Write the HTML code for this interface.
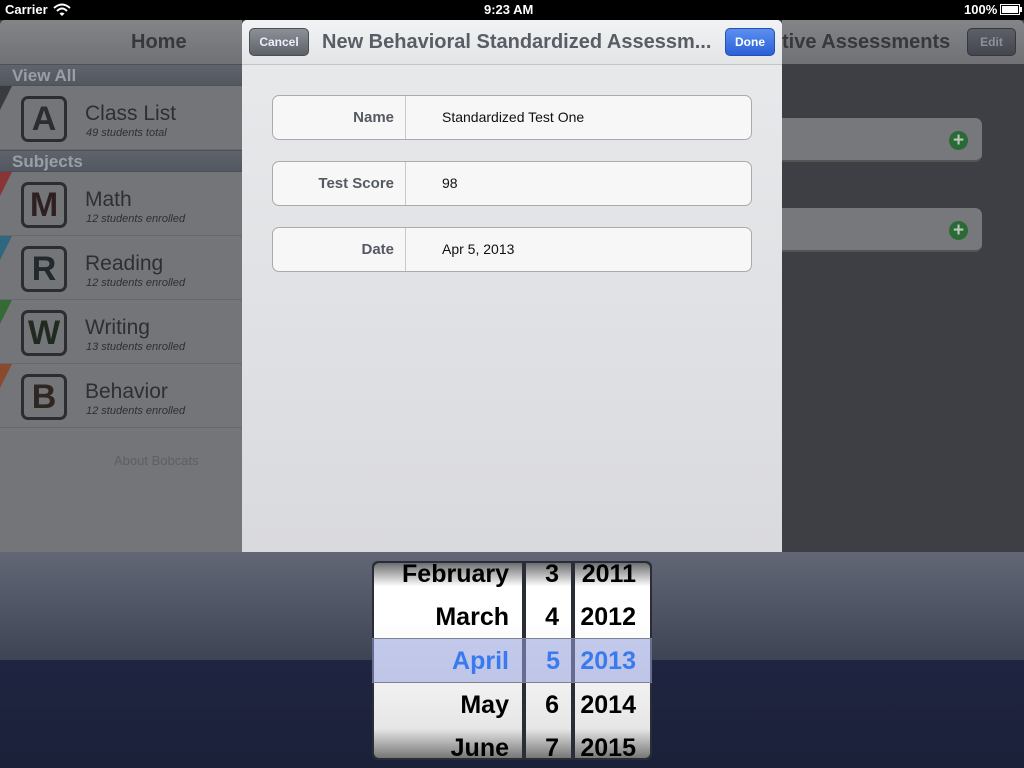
<!DOCTYPE html>
<html><head><meta charset="utf-8"><style>
*{margin:0;padding:0;box-sizing:border-box}
body{width:1024px;height:768px;position:relative;overflow:hidden;background:#3d3f45;font-family:"Liberation Sans",sans-serif}
.abs{position:absolute}
#status{left:0;top:0;width:1024px;height:20px;background:#000;color:#fff;font-size:13px;font-weight:bold}
#side{left:0;top:20px;width:242px;height:532px;background:#747578;border-top-left-radius:5px}
.nav{top:20px;height:44px;background:linear-gradient(#848588,#707174)}
.sec{left:0;width:242px;height:22px;background:linear-gradient(#5f646c,#53575f);color:#9a9ea6;font-weight:bold;font-size:17px;padding-left:12px;line-height:22px;border-top:1px solid #4c5058;border-bottom:1px solid #4c5058}
.row{left:0;width:242px;height:64px;border-bottom:1px solid #68696c}
.icon{left:21px;width:46px;height:46px;border:3px solid #2c2d30;border-radius:7px;font-size:34px;font-weight:bold;text-align:center;line-height:40px;color:#2c2d30}
.t{left:85px;font-size:21px;color:#2e2f32}
.s{left:86px;font-size:11px;font-style:italic;color:#2e2f32}
.card{left:782px;width:200px;height:44px;background:#77787b;border-radius:0 7px 7px 0;border-bottom:2px solid #555}
.plus{width:19px;height:19px;border-radius:50%;background:#2a6a35;color:#b9c6bb;font-weight:bold;text-align:center;line-height:19px;font-size:19px}
#modal{left:242px;top:20px;width:540px;height:532px;background:linear-gradient(#e9eaec,#d9dade);border-radius:5px 5px 0 0}
.field{left:30px;width:480px;height:45px;background:#f7f7f7;border:1px solid #a9abae;border-radius:7px}
.lab{left:0;width:133px;height:43px;border-right:1px solid #c7c8ca;text-align:right;padding-right:11px;line-height:43px;font-weight:bold;font-size:15px;color:#555a62}
.val{left:169px;line-height:43px;font-size:14px;color:#111}
#pick{left:0;top:552px;width:1024px;height:216px;background:linear-gradient(#626776 0%,#3f4455 50%,#1f2440 50.1%,#1c213a 100%)}
.col{top:563px;height:195px;background:linear-gradient(#6e6e70,#fff 12%,#fff 30%,#f2f2f2 60%,#e6e6e6 85%,#777 100%);overflow:hidden}
.col div{position:absolute;right:13px;font-size:25px;font-weight:bold;color:#000}
</style></head><body>
<div id="status" class="abs"><span class="abs" style="left:5px;top:2px">Carrier</span>
<svg class="abs" style="left:53px;top:3px" width="18" height="13" viewBox="0 0 18 13"><path d="M1 5 Q9 -2 17 5" stroke="#fff" stroke-width="2" fill="none"/><path d="M4 8 Q9 3 14 8" stroke="#fff" stroke-width="2" fill="none"/><path d="M6.5 10.5 L9 13 L11.5 10.5 Q9 8.5 6.5 10.5Z" fill="#fff"/></svg>
<span class="abs" style="left:484px;top:2px">9:23 AM</span>
<span class="abs" style="left:964px;top:2px">100%</span>
<div class="abs" style="left:1000px;top:4px;width:20px;height:11px;border:1px solid #fff;padding:1px"><div style="width:100%;height:100%;background:#fff"></div></div>
<div class="abs" style="left:1020px;top:7px;width:2px;height:5px;background:#fff"></div>
</div>
<div id="side" class="abs"></div>
<div class="abs nav" style="left:0;width:242px;border-top-left-radius:5px"><span class="abs" style="left:131px;top:11px;font-size:20px;font-weight:bold;color:#37383b">Home</span></div>
<div class="abs sec" style="top:64px">View All</div>
<div class="abs row" style="top:86px"><div class="abs icon" style="top:10px">A</div><div class="abs t" style="top:16px">Class List</div><div class="abs s" style="top:41px">49 students total</div></div>
<div class="abs sec" style="top:150px">Subjects</div>
<div class="abs row" style="top:172px"><div class="abs icon" style="top:10px;color:#2e2020">M</div><div class="abs t" style="top:16px">Math</div><div class="abs s" style="top:41px">12 students enrolled</div></div>
<div class="abs row" style="top:236px"><div class="abs icon" style="top:10px;color:#202a2e">R</div><div class="abs t" style="top:16px">Reading</div><div class="abs s" style="top:41px">12 students enrolled</div></div>
<div class="abs row" style="top:300px"><div class="abs icon" style="top:10px;color:#202a20">W</div><div class="abs t" style="top:16px">Writing</div><div class="abs s" style="top:41px">13 students enrolled</div></div>
<div class="abs row" style="top:364px"><div class="abs icon" style="top:10px;color:#2e2620">B</div><div class="abs t" style="top:16px">Behavior</div><div class="abs s" style="top:41px">12 students enrolled</div></div>
<div class="abs" style="left:0;top:172px;width:12px;height:24px;background:#8a3535;clip-path:polygon(0 0,100% 0,0 100%)"></div>
<div class="abs" style="left:0;top:236px;width:12px;height:24px;background:#2f6680;clip-path:polygon(0 0,100% 0,0 100%)"></div>
<div class="abs" style="left:0;top:300px;width:12px;height:24px;background:#356a35;clip-path:polygon(0 0,100% 0,0 100%)"></div>
<div class="abs" style="left:0;top:364px;width:12px;height:24px;background:#8a4a30;clip-path:polygon(0 0,100% 0,0 100%)"></div>
<div class="abs" style="left:0;top:86px;width:12px;height:24px;background:#3a3b3e;clip-path:polygon(0 0,100% 0,0 100%)"></div>
<div class="abs" style="left:114px;top:453px;font-size:13px;color:#5e5f62">About Bobcats</div>
<div class="abs nav" style="left:782px;width:242px;border-top-right-radius:5px"><span class="abs" style="left:0;top:11px;font-size:20px;font-weight:bold;color:#37383b">tive Assessments</span>
<div class="abs" style="left:185px;top:8px;width:49px;height:28px;background:linear-gradient(#5c6068,#43464d);border:1px solid #35373c;border-radius:5px;color:#8d9096;font-size:12px;font-weight:bold;text-align:center;line-height:26px">Edit</div></div>
<div class="abs card" style="top:118px"><div class="abs plus" style="left:167px;top:13px">+</div></div>
<div class="abs card" style="top:208px"><div class="abs plus" style="left:167px;top:13px">+</div></div>
<div id="modal" class="abs">
<div class="abs" style="left:0;top:0;width:540px;height:45px;background:linear-gradient(#f2f3f4,#e3e4e6);border-bottom:1px solid #c4c5c8;border-radius:5px 5px 0 0"></div>
<div class="abs" style="left:7px;top:8px;width:60px;height:28px;background:linear-gradient(#8d9197,#5d6168);border:1px solid #4b4e54;border-radius:5px;color:#eef;font-size:12px;font-weight:bold;text-align:center;line-height:26px">Cancel</div>
<div class="abs" style="left:80px;top:11px;font-size:20px;font-weight:bold;color:#595e66;white-space:nowrap">New Behavioral Standardized Assessm...</div>
<div class="abs" style="left:483px;top:8px;width:50px;height:28px;background:linear-gradient(#5c8ff0,#2a60d8);border:1px solid #2650b0;border-radius:5px;color:#fff;font-size:12px;font-weight:bold;text-align:center;line-height:26px">Done</div>
<div class="abs field" style="top:75px"><div class="abs lab">Name</div><div class="abs val">Standardized Test One</div></div>
<div class="abs field" style="top:141px"><div class="abs lab">Test Score</div><div class="abs val">98</div></div>
<div class="abs field" style="top:207px"><div class="abs lab">Date</div><div class="abs val">Apr 5, 2013</div></div>
</div>
<div id="pick" class="abs"></div>
<div class="abs" style="left:372px;top:561px;width:280px;height:199px;background:#2a2c36;border-radius:6px"></div>
<div class="abs col" style="left:374px;width:148px;border-radius:5px 0 0 5px"><div style="top:-3px">February</div><div style="top:40px">March</div><div style="top:128px">May</div><div style="top:171px">June</div></div>
<div class="abs col" style="left:526px;width:45px"><div style="top:-3px;right:12px">3</div><div style="top:40px;right:12px">4</div><div style="top:128px;right:12px">6</div><div style="top:171px;right:12px">7</div></div>
<div class="abs col" style="left:575px;width:75px;border-radius:0 5px 5px 0"><div style="top:-3px;right:14px">2011</div><div style="top:40px;right:14px">2012</div><div style="top:128px;right:14px">2014</div><div style="top:171px;right:14px">2015</div></div>
<div class="abs" style="left:372px;top:638px;width:280px;height:45px;background:rgba(150,160,220,.55);border-top:1px solid #7f8290;border-bottom:1px solid #7f8290;font-size:25px;font-weight:bold;color:#3a7af0">
<span class="abs" style="right:143px;top:8px">April</span><span class="abs" style="right:92px;top:8px">5</span><span class="abs" style="right:16px;top:8px">2013</span></div>
</body></html>
